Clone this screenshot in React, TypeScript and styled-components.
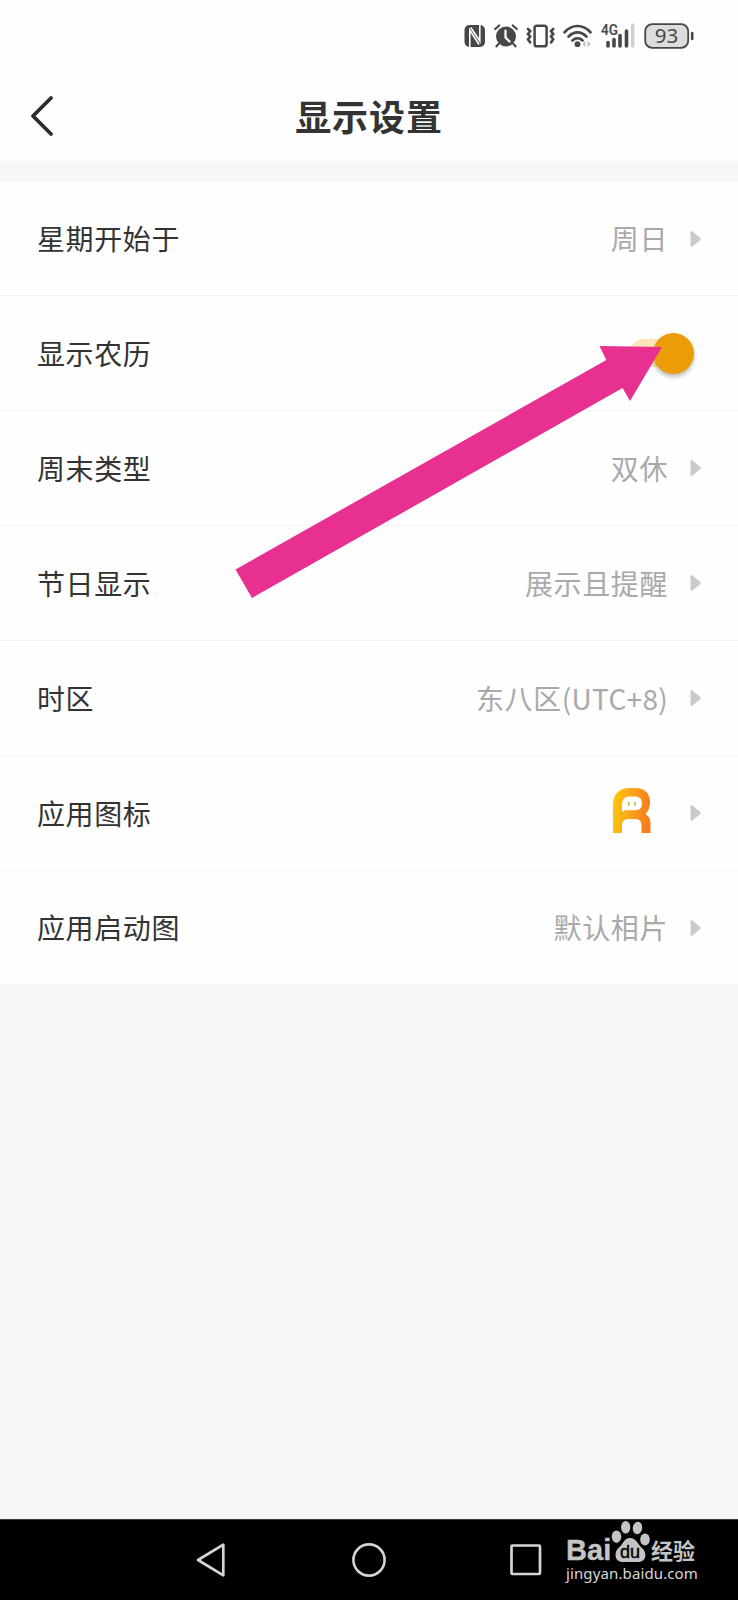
import React from 'react';
import styled, { createGlobalStyle } from 'styled-components';

const GlobalStyle = createGlobalStyle`
  * { box-sizing: border-box; }
  body { margin: 0; background: #f7f7f7; }
`;

const Screen = styled.main`
  position: relative;
  display: flex;
  flex-direction: column;
  width: 738px;
  height: 1600px;
  overflow: hidden;
  background: #f7f7f7;
  color: #333;
  font-family: 'Noto Sans CJK SC', sans-serif;
`;

const StatusBar = styled.div`
  display: flex;
  align-items: center;
  justify-content: flex-end;
  height: 71px;
  padding-right: 44px;
  background: #fefefe;
  svg { display: block; }
`;

const StatusIcon = styled.svg<{ $gap: number }>`
  flex: none;
  margin-right: ${p => p.$gap}px;
`;

const Header = styled.header`
  display: grid;
  grid-template-columns: 84px 1fr 84px;
  align-items: center;
  height: 90px;
  background: #fefefe;
`;

const BackButton = styled.button`
  display: flex;
  width: 84px;
  padding: 0 0 0 30px;
  border: 0;
  background: none;
`;

const Title = styled.h1`
  margin: 0;
  padding-bottom: 3px;
  font-size: 36px;
  line-height: 54px;
  font-weight: 700;
  letter-spacing: 0.9px;
  text-align: center;
`;

const SettingsList = styled.section`
  display: flex;
  flex-direction: column;
  margin-top: 21px;
  background: #fefefe;
`;

const Label = styled.span`
  flex: 1;
  font-size: 28px;
  line-height: 42px;
  letter-spacing: 0.6px;
`;

const Value = styled.span`
  margin-right: 22px;
  color: #a9a9ab;
  font-size: 28px;
  line-height: 42px;
  letter-spacing: 0.6px;
`;

const Row = styled.div`
  display: flex;
  align-items: center;
  height: 115px;
  padding: 0 36px 0 37px;
  border-bottom: 1px solid #f5f5f5;
  &:first-child { height: 114px; }
  &:first-child ${Label}, &:first-child ${Value},
  &:last-child ${Label}, &:last-child ${Value} { padding-bottom: 2px; }
  &:last-child { height: 113px; border-bottom: 0; }
`;

const Latin = styled.span`
  letter-spacing: 0.3px;
`;

const AppIcon = styled.svg`
  margin-right: 39px;
  margin-top: -5px;
`;

const Track = styled.div`
  display: flex;
  align-items: center;
  justify-content: flex-end;
  width: 64px;
  height: 28px;
  margin-right: 8px;
  border-radius: 14px;
  background: #fbe5b8;
`;

const Thumb = styled.div`
  flex: none;
  width: 41px;
  height: 41px;
  border-radius: 50%;
  background: #ec9c07;
  box-shadow: 0 3px 4px rgba(0, 0, 0, 0.26);
`;

const PointerArrow = styled.svg`
  position: absolute;
  left: 0;
  top: 330px;
  pointer-events: none;
`;

const NavBar = styled.nav`
  display: flex;
  align-items: center;
  height: 81px;
  margin-top: auto;
  padding-left: 195px;
  border-top: 1px solid #3a3a3a;
  background: #000;
`;

const NavIcon = styled.svg<{ $gap: number }>`
  flex: none;
  margin-right: ${p => p.$gap}px;
`;

const Watermark = styled.div`
  position: absolute;
  left: 566px;
  top: 1520px;
  width: 140px;
  color: #c4c4c4;
`;

const Brand = styled.div`
  display: flex;
  align-items: flex-end;
  height: 43px;
`;

const BrandLatin = styled.span`
  width: 45px;
  font: 700 29px/29px 'Liberation Sans', sans-serif;
  letter-spacing: 0.1px;
  -webkit-text-stroke: 0.4px #c4c4c4;
  transform: translateY(2px);
`;

const BrandHan = styled.span`
  margin-left: 1px;
  padding-bottom: 2px;
  font-size: 22px;
  line-height: 24px;
  font-weight: 700;
`;

const Site = styled.div`
  margin-top: 0;
  font: 400 15px/20px 'Noto Sans', sans-serif;
  letter-spacing: 0.12px;
  color: #d8d8d8;
  white-space: nowrap;
`;

const ink = '#474747';

const Chevron = () => (
  <svg width="12" height="18" viewBox="0 0 12 18">
    <path d="M.5 2Q.5 .2 2.2 1.3L10.3 8Q11.5 9 10.3 10L2.2 16.7Q.5 17.8 .5 16Z" fill="#cacaca" />
  </svg>
);

const rowData: { label: string; value?: React.ReactNode; kind?: 'toggle' | 'icon' }[] = [
  { label: '星期开始于', value: '周日' },
  { label: '显示农历', kind: 'toggle' },
  { label: '周末类型', value: '双休' },
  { label: '节日显示', value: '展示且提醒' },
  { label: '时区', value: <>东八区<Latin>(UTC+8)</Latin></> },
  { label: '应用图标', kind: 'icon' },
  { label: '应用启动图', value: '默认相片' },
];

const StatusIcons = () => (
  <StatusBar>
    <StatusIcon $gap={8} width="22" height="24" viewBox="0 0 22 24">
      <rect x="0.5" y="1" width="20.5" height="22" rx="5" fill={ink} />
      <path d="M5.8 23V6L15 20.5" fill="none" stroke="#fefefe" strokeWidth="1.6" />
      <path d="M6.8 3.5L15.8 17V1" fill="none" stroke="#fefefe" strokeWidth="1.6" />
    </StatusIcon>
    <StatusIcon $gap={8} width="24" height="24" viewBox="0 0 24 24">
      <circle cx="12" cy="12.5" r="10" fill={ink} />
      <path d="M1.2 5L5.2 1.5M18.8 1.5L22.8 5M4.5 20L2.5 22.3M19.5 20L21.5 22.3" stroke={ink} strokeWidth="2.2" strokeLinecap="round" />
      <path d="M11.5 6.5V13.5L15.5 17.5" fill="none" stroke="#fefefe" strokeWidth="2.2" strokeLinecap="round" />
    </StatusIcon>
    <StatusIcon $gap={7} width="30" height="24" viewBox="0 0 30 24">
      <rect x="8.6" y="1.7" width="12" height="20.6" rx="2.4" fill="none" stroke={ink} strokeWidth="2.5" />
      <path d="M2 5L4.2 7.2L2 9.9L4.2 12.6L2 15.3L4.2 18.5M27.2 5L25 7.2L27.2 9.9L25 12.6L27.2 15.3L25 18.5" fill="none" stroke={ink} strokeWidth="2.6" strokeLinecap="round" />
    </StatusIcon>
    <StatusIcon $gap={8} width="30" height="24" viewBox="0 0 30 24">
      <g fill="none" stroke={ink} strokeWidth="2.7" strokeLinecap="round">
        <path d="M1.5 8.3C9 -.1 20 -.1 27.5 8.3" />
        <path d="M5.5 12.6C11 7 18 7 23.5 12.6" />
        <path d="M9.4 16.4C12.5 13.6 16.5 13.6 19.6 16.4" />
      </g>
      <circle cx="14.5" cy="20.2" r="2.9" fill={ink} />
      <path d="M22.5 17L19.5 20L22.5 23ZM24.5 17L27.8 20L24.5 23Z" fill="#bdbdbd" />
    </StatusIcon>
    <StatusIcon $gap={8} width="35" height="26" viewBox="0 0 35 26">
      <text x="0" y="12" fill={ink} fontFamily="Roboto" fontWeight="600" fontSize="14.5" textLength="17" lengthAdjust="spacingAndGlyphs">4G</text>
      <path d="M7 19.5V23M13 16.5V23M19 12.5V23M25.5 8V23" stroke={ink} strokeWidth="3.6" strokeLinecap="round" />
      <path d="M31.7 2V23" stroke="#cfcfcf" strokeWidth="3.4" strokeLinecap="round" />
    </StatusIcon>
    <svg width="50" height="34" viewBox="0 -4 50 34">
      <rect x="1.2" y="1.2" width="43" height="23.6" rx="7" fill="#dcdcdc" stroke={ink} strokeWidth="1.8" />
      <path d="M48.2 10V16" stroke={ink} strokeWidth="2.6" strokeLinecap="round" />
      <text x="22.5" y="20" textAnchor="middle" fill={ink} fontFamily="Noto Sans" fontSize="20.5" fontWeight="400">93</text>
    </svg>
  </StatusBar>
);

const LetterMark = () => (
  <AppIcon width="38" height="46" viewBox="0 0 38 46">
    <defs>
      <linearGradient id="mark" x1="0" y1="0" x2="1" y2="0.15">
        <stop offset="0" stopColor="#fccb05" />
        <stop offset="0.5" stopColor="#faa61b" />
        <stop offset="1" stopColor="#f67d1d" />
      </linearGradient>
    </defs>
    <path d="M0 45V17C0 6 6 0 17 0H22C32 0 37 6 37 14C37 19 35.5 23 32.5 26C36 28.5 37.5 31 37.5 36V45H28.5V38C28.5 33 26.5 31 22 31H16C11 31 9 33 9 38V45Z" fill="url(#mark)" />
    <path d="M9 24V17C9 11 12 8.5 17 8.5H22C26.5 8.5 29 11 29 15.5C29 20 26.5 22.2 22 22.2H15C12 22.2 10 22.5 9 24Z" fill="#fefefe" />
    <path d="M15.8 14V17.5M22 14V17.5" stroke="#9fc52c" strokeWidth="1.5" />
  </AppIcon>
);

export default function App() {
  return (
    <>
      <GlobalStyle />
      <Screen>
        <StatusIcons />
        <Header>
          <BackButton aria-label="返回">
            <svg width="24" height="42" viewBox="0 0 24 42">
              <path d="M21 3L3 21L21 39" fill="none" stroke="#2b2b2b" strokeWidth="3.8" strokeLinecap="round" strokeLinejoin="round" />
            </svg>
          </BackButton>
          <Title>显示设置</Title>
        </Header>
        <SettingsList>
          {rowData.map(row => (
            <Row key={row.label}>
              <Label>{row.label}</Label>
              {row.kind === 'toggle' && <Track><Thumb /></Track>}
              {row.kind === 'icon' && <LetterMark />}
              {row.value && <Value>{row.value}</Value>}
              {row.kind !== 'toggle' && <Chevron />}
            </Row>
          ))}
        </SettingsList>
        <NavBar>
          <NavIcon $gap={126} width="31" height="36" viewBox="0 0 31 36">
            <path d="M28.3 2.7V33.3L3 18Z" fill="none" stroke="#d4d4d4" strokeWidth="2.7" strokeLinejoin="round" />
          </NavIcon>
          <NavIcon $gap={124} width="34" height="36" viewBox="0 0 34 36">
            <circle cx="17" cy="18" r="15.6" fill="none" stroke="#d4d4d4" strokeWidth="2.6" />
          </NavIcon>
          <NavIcon $gap={0} width="32" height="36" viewBox="0 0 32 36">
            <rect x="1.5" y="3.5" width="28.5" height="28.5" rx="1" fill="none" stroke="#d4d4d4" strokeWidth="2.7" />
          </NavIcon>
        </NavBar>
        <PointerArrow width="738" height="280" viewBox="0 330 738 280">
          <path d="M662 347L599.5 346L606.3 360L235.5 569.5L252 598L622.6 388L630 401Z" fill="#e83090" />
        </PointerArrow>
        <Watermark>
          <Brand>
            <BrandLatin>Bai</BrandLatin>
            <svg width="39" height="43" viewBox="0 0 39 43">
              <g fill="#c4c4c4">
                <ellipse cx="5.5" cy="16.7" rx="4.8" ry="6.2" />
                <ellipse cx="14.7" cy="7.3" rx="4.6" ry="6.3" />
                <ellipse cx="26.5" cy="8" rx="4.7" ry="6.2" transform="rotate(8 26.5 8)" />
                <ellipse cx="34" cy="19.5" rx="4.8" ry="6" />
                <path d="M19 18C13 18 12.5 24 7.5 28C3 32 3 42 12 42H27C36 42 36 32 31 28C26.5 24 25 18 19 18Z" />
              </g>
              <text x="9" y="37.5" fill="#000" fontFamily="Liberation Sans" fontWeight="400" fontSize="18" stroke="#000" strokeWidth="0.4" textLength="20">du</text>
            </svg>
            <BrandHan>经验</BrandHan>
          </Brand>
          <Site>jingyan.baidu.com</Site>
        </Watermark>
      </Screen>
    </>
  );
}
